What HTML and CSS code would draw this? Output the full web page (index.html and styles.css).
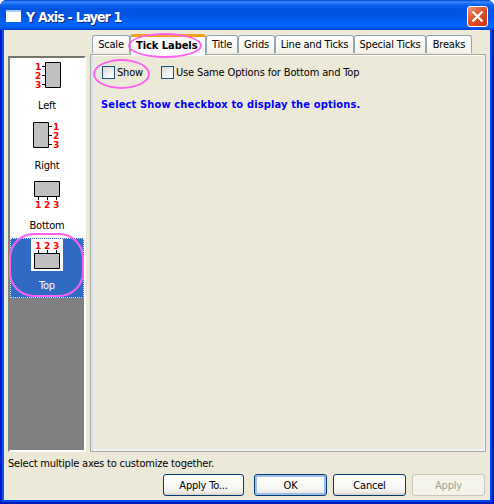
FILE: index.html
```html
<!DOCTYPE html>
<html lang="en">
<head>
<meta charset="utf-8">
<title>Y Axis - Layer 1</title>
<link rel="stylesheet" href="styles.css">
</head>
<body>
<div class="window">
  <header class="titlebar">
    <span class="app-icon"></span>
    <h1 class="caption">Y Axis - Layer 1</h1>
    <button class="close" aria-label="Close"><svg width="21" height="21" viewBox="0 0 21 21"><path d="M5.500 5.500l10 10M15.500 5.500l-10 10" stroke="#fff" stroke-width="2.300"/></svg></button>
  </header>
  <main class="content">
    <nav class="axes">
      <div class="axis">
        <svg class="axis-icon" width="32" height="32" viewBox="0 0 32 32"><path d="M14.500 3.500h15v25h-15zM11 7.500h3M11 16.500h3M11 25.500h3"/><text x="4" y="11">1</text><text x="4" y="20">2</text><text x="4" y="29">3</text></svg>
        <span class="axis-name">Left</span>
      </div>
      <div class="axis">
        <svg class="axis-icon" width="32" height="32" viewBox="0 0 32 32"><path d="M2.500 3.500h15v25h-15zM18 7.500h3M18 16.500h3M18 25.500h3"/><text x="22" y="11">1</text><text x="22" y="20">2</text><text x="22" y="29">3</text></svg>
        <span class="axis-name">Right</span>
      </div>
      <div class="axis">
        <svg class="axis-icon" width="32" height="32" viewBox="0 0 32 32"><path d="M3.500 2.500h25v15h-25zM7.500 18v3M16.500 18v3M25.500 18v3"/><text x="4" y="29">1</text><text x="13" y="29">2</text><text x="22" y="29">3</text></svg>
        <span class="axis-name">Bottom</span>
      </div>
      <div class="axis selected">
        <svg class="axis-icon" width="32" height="32" viewBox="0 0 32 32"><path d="M3.500 14.500h25v15h-25zM7.500 11v3M16.500 11v3M25.500 11v3"/><text x="4" y="10">1</text><text x="13" y="10">2</text><text x="22" y="10">3</text></svg>
        <span class="axis-name">Top</span>
        <span class="mark mark-axis"></span>
      </div>
    </nav>
    <section class="sheet">
      <div class="tabs">
        <div class="tab scale">Scale</div>
        <div class="tab active"><span class="tab-text">Tick Labels</span><span class="mark mark-tab"></span></div>
        <div class="tab title">Title</div>
        <div class="tab grids">Grids</div>
        <div class="tab line">Line and Ticks</div>
        <div class="tab special">Special Ticks</div>
        <div class="tab breaks">Breaks</div>
      </div>
      <div class="panel">
        <div class="options">
          <label class="check show"><span class="box"></span><span class="label">Show</span><span class="mark mark-show"></span></label>
          <label class="check same"><span class="box"></span><span class="label">Use Same Options for Bottom and Top</span></label>
        </div>
        <p class="hint">Select Show checkbox to display the options.</p>
      </div>
    </section>
  </main>
  <p class="status">Select multiple axes to customize together.</p>
  <footer class="actions">
    <button class="btn wide">Apply To...</button>
    <button class="btn default">OK</button>
    <button class="btn">Cancel</button>
    <button class="btn disabled" disabled>Apply</button>
  </footer>
</div>
</body>
</html>
```
FILE: styles.css
```css
* { box-sizing: border-box; }
body { margin: 0; background: #fff; font: 11px/14px "DejaVu Sans Condensed", "DejaVu Sans", sans-serif; font-stretch: condensed; letter-spacing: -0.2px; color: #000; }
h1, p { margin: 0; }
button { font: inherit; letter-spacing: inherit; color: inherit; padding: 0; }
.window { width: 494px; height: 504px; padding: 0 4px 4px; background: #ece9d8; border-radius: 7px 7px 0 0; box-shadow: inset 2px 0 #0019cf, inset -2px 0 #0019b4, inset 0 -2px #0019b4, inset 4px 0 #0855e8, inset -4px 0 #0048f1, inset 0 -4px #0048f1; overflow: hidden; white-space: nowrap; }
.titlebar { display: flex; align-items: center; height: 30px; margin: 0 -4px; padding: 2px 6px 0; background: linear-gradient(#0040d0 0, #3c8cff 2px, #0a62ee 5px, #0054e0 9px, #0056e6 17px, #0066ff 25px, #0062f8 27px, #003dd0 30px); }
.app-icon { width: 15px; height: 12px; margin-top: -1px; background: #fff; border-top: 2px solid #a8ccff; }
.caption { margin: 1px 0 0 5px; flex: 1; font: bold 14px/18px "DejaVu Sans Condensed", sans-serif; font-stretch: condensed; letter-spacing: -1px; word-spacing: 0.500px; color: #fff; text-shadow: 1px 1px #0a2a88; }
.close { width: 21px; height: 21px; border: 1px solid #fff; border-radius: 3px; background: linear-gradient(135deg, #f09a80, #e0512d 45%, #c9350c); display: flex; align-items: center; justify-content: center; }
.close svg { flex: none; }
.content { display: flex; padding: 4px 4px 0; height: 423px; }
.axes { width: 78px; height: 396px; margin-top: 22px; border: 2px solid #808078; border-top-color: #77756b; border-right-color: #fff; border-bottom-color: #fff; background: linear-gradient(#fff 240px, #808080 240px); }
.axis { position: relative; width: 74px; height: 60px; display: flex; flex-direction: column; align-items: center; }
.axis-icon { flex: none; background: #fff; margin-top: 1px; }
.axis-icon path { fill: #c0c0c0; stroke: #000; }
.axis-icon text { font: bold 9px "DejaVu Sans", sans-serif; font-stretch: normal; letter-spacing: 0; fill: #f00; }
.axis-name { margin-top: 8px; }
.selected { background: #316ac5; border: 1px dotted #ceb; color: #fff; }
.selected .axis-icon { margin-top: 0; }
.mark { position: absolute; border: 2px solid #ff60f0; pointer-events: none; }
.mark-axis { left: -2px; top: -6px; width: 75px; height: 64px; border-radius: 25px; }
.sheet { width: 396px; margin-left: 4px; }
.tabs { display: flex; height: 20px; padding-left: 2px; align-items: flex-end; position: relative; }
.tab { height: 18px; margin-bottom: 1px; border: 1px solid #91a7b4; border-bottom: 0; border-radius: 3px 3px 0 0; background: linear-gradient(#fff, #f3f3ea); text-align: center; line-height: 18px; }
.scale { width: 38px; }
.active { position: relative; width: 76px; height: 21px; margin-bottom: -1px; padding-left: 5px; border-top: 3px solid #f4a11f; background: #fcfcfe; font-weight: bold; z-index: 1; letter-spacing: -0.050px; line-height: 17px; text-align: left; }
.mark-tab { left: -3px; top: -4px; width: 74px; height: 25px; border-radius: 50%; }
.title { width: 32px; }
.grids { width: 37px; }
.line { width: 79px; }
.special { width: 72px; }
.breaks { width: 46px; }
.panel { height: 398px; border: 1px solid #aca899; box-shadow: inset 2px 0 #d7e3f8, inset -2px -2px #eef3fb, inset 0 1px #fff; padding: 10px; }
.options { display: flex; align-items: center; height: 15px; }
.check { position: relative; display: flex; align-items: center; }
.show { width: 60px; padding-left: 1px; }
.show .label { letter-spacing: -0.200px; }
.same .label { letter-spacing: -0.150px; }
.label { height: 13px; }
.box { width: 13px; height: 13px; margin-right: 2px; border: 1px solid #1c5180; background: linear-gradient(135deg, #dcdcd7, #fff); }
.mark-show { left: -8px; top: -7px; width: 57px; height: 30px; border-radius: 50%; }
.hint { margin-top: 18px; font-weight: bold; color: #00f; letter-spacing: 0.150px; }
.status { margin-left: 4px; padding-top: 1px; line-height: 20px; height: 21px; }
.actions { display: flex; justify-content: flex-end; padding-right: 5px; gap: 6px; }
.btn { width: 73px; height: 22px; padding-top: 1px; border: 1px solid #003c74; border-radius: 3px; background: linear-gradient(#fff, #f3f3ee 80%, #d8d2c5); }
.wide { width: 81px; margin-right: 4px; }
.default { box-shadow: inset 0 0 0 2px #a0bdf0; }
.disabled { border-color: #c9c7ba; background: #f5f4ea; color: #a1a192; }
```
